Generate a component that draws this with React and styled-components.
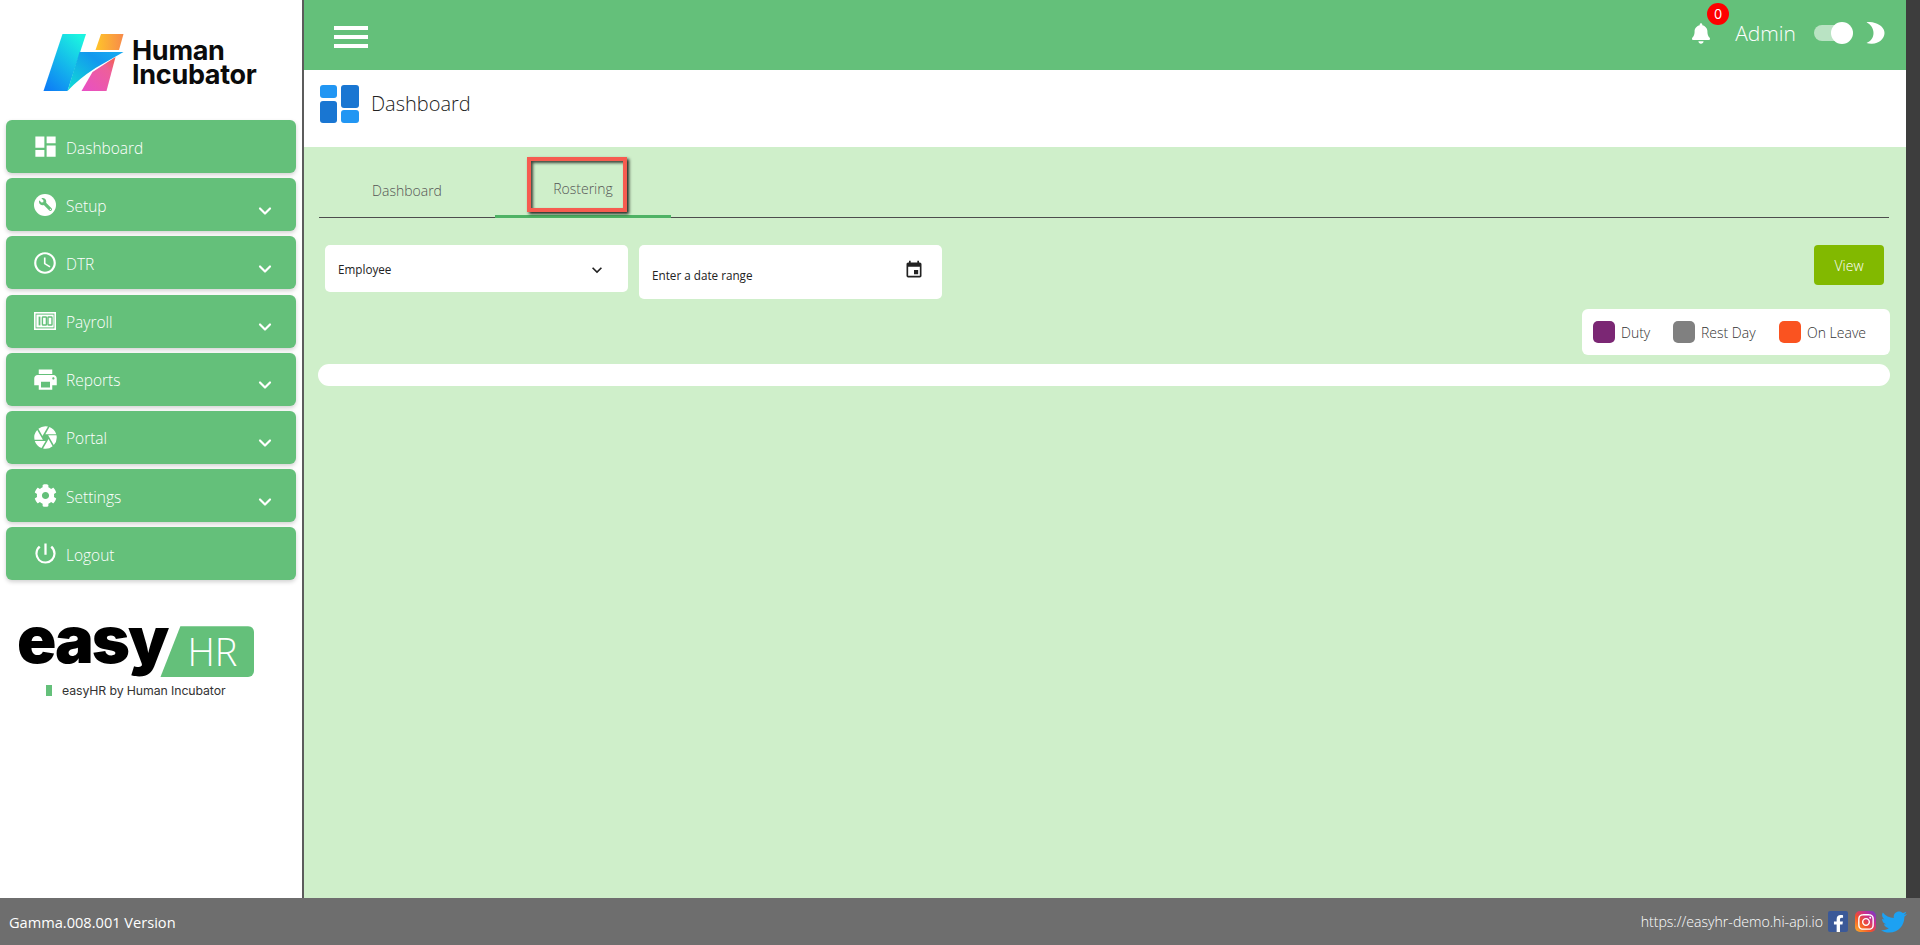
import React from "react";
import styled, { createGlobalStyle } from "styled-components";
import { MdDashboard, MdEvent, MdPowerSettingsNew, MdOutlineAccessTime, MdKeyboardArrowDown, MdPrint, MdCamera } from "react-icons/md";
import { FaCog, FaBell, FaWrench, FaFacebookF, FaInstagram, FaTwitter } from "react-icons/fa";
import { FiChevronDown } from "react-icons/fi";

const Global = createGlobalStyle`
  html, body { margin: 0; padding: 0; background: #fff; }
  * { box-sizing: border-box; }
  body { font-family: "Open Sans", "Liberation Sans", sans-serif; }
`;

const Shell = styled.div`
  width: 1920px;
  height: 945px;
  display: flex;
  flex-direction: column;
  overflow: hidden;
`;
const Upper = styled.div`
  flex: 1;
  display: flex;
  min-height: 0;
`;
const Sidebar = styled.aside`
  width: 304px;
  flex: none;
  background: #fff;
  border-right: 2px solid #5c5c5c;
  padding: 0 6px;
`;
const LogoRow = styled.div`
  height: 120px;
  display: flex;
  align-items: flex-start;
  padding: 34px 0 0 37px;
  gap: 7px;
`;
const LogoWords = styled.div`
  font-family: "Inter", sans-serif;
  font-weight: 700;
  font-size: 27px;
  line-height: 23.5px;
  letter-spacing: -0.3px;
  color: #0b0b0b;
  padding-top: 5px;
`;
const Menu = styled.nav`
  display: flex;
  flex-direction: column;
  gap: 5.2px;
  width: 290px;
`;
const MenuItem = styled.div`
  height: 53px;
  background: #64c07a;
  border-radius: 6px;
  box-shadow: 0 2px 4px rgba(0, 0, 0, 0.18);
  display: flex;
  align-items: center;
  padding: 0 21px 0 28px;
  color: #fff;
  font-size: 15.5px;
  font-weight: 300;
`;
const MenuIcon = styled.span`
  width: 22px;
  height: 22px;
  margin-right: 10px;
  display: flex;
  align-items: center;
  justify-content: center;
  color: #fff;
  svg { flex: none; }
`;
const Label = styled.span`
  padding-top: 2px;
`;
const Chevron = styled(FiChevronDown)`
  margin-left: auto;
  margin-top: 12px;
  font-size: 20px;
  stroke-width: 2.6;
`;
const WrenchDisc = styled.span`
  width: 22px;
  height: 22px;
  border-radius: 50%;
  background: #fff;
  color: #64c07a;
  display: flex;
  align-items: center;
  justify-content: center;
  font-size: 13px;
  svg { transform: scaleX(-1); }
`;
const EasyBlock = styled.div`
  margin: 39px 0 0 11px;
`;
const EasyRow = styled.div`
  display: flex;
  align-items: flex-start;
  height: 62px;
`;
const EasyWord = styled.div`
  font-family: "Inter", sans-serif;
  font-weight: 900;
  font-size: 65px;
  line-height: 58px;
  letter-spacing: -2px;
  color: #000;
  margin-top: -8px;
`;
const HrBadge = styled.div`
  width: 94px;
  height: 51px;
  margin: 7px 0 0 -7px;
  background: #64c07a;
  border-radius: 0 6px 6px 0;
  clip-path: polygon(20px 0, 100% 0, 100% 100%, 0 100%);
  color: #fff;
  font-weight: 300;
  font-size: 38px;
  line-height: 51px;
  text-align: right;
  padding-right: 17px;
`;
const Tagline = styled.div`
  display: flex;
  align-items: center;
  gap: 10px;
  margin: 2px 0 0 29px;
  font-size: 12.3px;
  color: #333;
  font-family: "Inter", sans-serif;
  font-weight: 400;
  letter-spacing: -0.1px;
`;
const TagMark = styled.span`
  width: 6px;
  height: 11px;
  background: #64c07a;
`;
const Main = styled.main`
  flex: 1;
  min-width: 0;
  display: flex;
  flex-direction: column;
  background: #cfefca;
`;
const Strip = styled.div`
  width: 14px;
  flex: none;
  background: #3d3d3d;
`;
const Topbar = styled.header`
  height: 70px;
  flex: none;
  background: #64c07a;
  display: flex;
  align-items: center;
  padding: 0 21px 0 30px;
  color: #fff;
`;
const Burger = styled.div`
  width: 34px;
  height: 22px;
  display: flex;
  flex-direction: column;
  justify-content: space-between;
  margin-top: 4px;
  span { display: block; height: 4px; background: #fff; }
`;
const TopRight = styled.div`
  margin-left: auto;
  display: flex;
  align-items: center;
  margin-top: -4px;
`;
const BellWrap = styled.div`
  position: relative;
  width: 18px;
  height: 22px;
  font-size: 21px;
  display: flex;
  align-items: center;
  justify-content: center;
  margin-right: 25px;
`;
const Badge = styled.span`
  position: absolute;
  top: -19px;
  left: 15px;
  width: 22px;
  height: 22px;
  border-radius: 50%;
  background: #f00;
  color: #fff;
  font-size: 13px;
  font-weight: 400;
  line-height: 22px;
  text-align: center;
  font-family: "Inter", sans-serif;
`;
const AdminName = styled.span`
  font-size: 21px;
  font-weight: 300;
  margin-right: 18px;
`;
const Toggle = styled.div`
  position: relative;
  width: 38px;
  height: 16px;
  border-radius: 8px;
  background: rgba(255, 255, 255, 0.55);
  margin-right: 14px;
`;
const Knob = styled.span`
  position: absolute;
  top: -3px;
  right: -1px;
  width: 22px;
  height: 22px;
  border-radius: 50%;
  background: #fff;
`;
const TitleBar = styled.div`
  height: 77px;
  flex: none;
  background: #fff;
  display: flex;
  align-items: center;
  padding: 0 0 9px 16px;
  gap: 12px;
`;
const Title = styled.h1`
  margin: 0 0 2px;
  font-size: 20px;
  font-weight: 300;
  color: #222;
`;
const Tabs = styled.div`
  display: flex;
  margin: 23px 17px 0 15px;
  height: 48px;
  border-bottom: 1px solid #4d4d4d;
`;
const Tab = styled.div`
  position: relative;
  width: 176px;
  height: 48px;
  display: flex;
  align-items: center;
  justify-content: center;
  padding-bottom: 8px;
  font-size: 14px;
  font-weight: 300;
  color: #555;
  border-bottom: ${(p) => (p.$active ? "3px solid #4fb365" : "none")};
`;
const Callout = styled.span`
  position: absolute;
  left: 32px;
  top: -13px;
  width: 100px;
  height: 55px;
  border: 4px solid #f65c50;
  box-shadow: 2px 2px 3px rgba(0, 0, 0, 0.85), inset 2px 2px 3px rgba(0, 0, 0, 0.7);
`;
const Filters = styled.div`
  display: flex;
  align-items: flex-start;
  gap: 11px;
  padding: 27px 22px 0 21px;
`;
const Field = styled.div`
  width: 303px;
  flex: none;
  height: ${(p) => p.$h}px;
  background: #fff;
  border-radius: 5px;
  display: flex;
  align-items: flex-start;
  justify-content: space-between;
  color: #222;
  font-size: 11.7px;
`;
const FieldText = styled.span`
  padding: ${(p) => p.$top}px 0 0 ${(p) => p.$left}px;
`;
const FieldIcon = styled.span`
  display: flex;
  font-size: 20px;
  color: #222;
  padding: 15px ${(p) => p.$right}px 0 0;
`;
const ViewButton = styled.button`
  margin-left: auto;
  width: 70px;
  height: 40px;
  border: 0;
  border-radius: 4px;
  background: #82b900;
  color: #fff;
  font-family: inherit;
  font-size: 14px;
  font-weight: 300;
`;
const LegendRow = styled.div`
  display: flex;
  justify-content: flex-end;
  padding: 10px 16px 0 0;
`;
const Legend = styled.div`
  width: 308px;
  height: 46px;
  background: #fff;
  border-radius: 6px;
  display: flex;
  align-items: center;
  padding-left: 11px;
`;
const LegendItem = styled.div`
  display: flex;
  align-items: center;
  gap: 6px;
  width: ${(p) => p.$w}px;
  font-size: 14px;
  font-weight: 300;
  color: #333;
`;
const Swatch = styled.span`
  width: 22px;
  height: 22px;
  border-radius: 5px;
  background: ${(p) => p.$c};
`;
const EmptyBar = styled.div`
  margin: 9px 16px 0 14px;
  height: 22px;
  background: #fff;
  border-radius: 11px;
`;
const Footer = styled.footer`
  height: 47px;
  flex: none;
  background: #6e6e6e;
  display: flex;
  align-items: center;
  padding: 0 13px 0 9px;
  color: #fff;
`;
const Version = styled.span`
  font-size: 14.6px;
  font-weight: 400;
  padding-top: 1px;
`;
const FooterRight = styled.div`
  margin-left: auto;
  display: flex;
  align-items: center;
  gap: 5px;
  font-size: 14.1px;
  font-weight: 300;
`;
const Fb = styled.span`
  width: 20px;
  height: 21px;
  background: #3b5998;
  border-radius: 2px;
  display: flex;
  align-items: flex-end;
  justify-content: center;
  font-size: 17px;
  color: #fff;
`;
const Ig = styled.span`
  width: 21px;
  height: 21px;
  border-radius: 5px;
  margin-left: 2px;
  background: linear-gradient(45deg, #fdb32b 0%, #f2502b 40%, #c62f94 70%, #6a3bd0 100%);
  display: flex;
  align-items: center;
  justify-content: center;
  font-size: 18px;
  color: #fff;
`;
const Tw = styled(FaTwitter)`
  font-size: 26px;
  color: #1da1f2;
`;

const HumanLogo = () => (
  <svg width="82" height="58" viewBox="43 34 81 58" style={{ flex: "none" }}>
    <defs>
      <linearGradient id="hiA" x1="0.1" y1="1" x2="0.8" y2="0">
        <stop offset="0" stopColor="#0d7cf6" />
        <stop offset="1" stopColor="#1cf4e0" />
      </linearGradient>
      <linearGradient id="hiB" x1="0" y1="1" x2="1" y2="0.2">
        <stop offset="0" stopColor="#11e0d4" />
        <stop offset="0.7" stopColor="#1398ee" />
        <stop offset="1" stopColor="#16a8f0" />
      </linearGradient>
      <linearGradient id="hiC" x1="0" y1="0" x2="1" y2="0">
        <stop offset="0" stopColor="#ffc52a" />
        <stop offset="1" stopColor="#f78a4a" />
      </linearGradient>
      <linearGradient id="hiD" x1="0" y1="1" x2="1" y2="0">
        <stop offset="0" stopColor="#e84fc6" />
        <stop offset="0.7" stopColor="#ee5f9a" />
        <stop offset="1" stopColor="#f2604a" />
      </linearGradient>
    </defs>
    <path d="M43 91 L62 34 L85.5 34 L67 91 Z" fill="url(#hiA)" />
    <path d="M95 50 L100.5 34 L123 34 L118.5 50 Z" fill="url(#hiC)" />
    <path d="M81 91 L92 72 L115 57 L106 91 Z" fill="url(#hiD)" />
    <path d="M67 91 L79 52 L123 52 L95 68 Q78 79 67 91 Z" fill="url(#hiB)" />
  </svg>
);

const PayrollIcon = () => (
  <svg width="22" height="18" viewBox="0 0 22 18">
    <rect x="0.8" y="0.8" width="20.4" height="16.4" fill="none" stroke="#fff" strokeWidth="1.6" />
    <rect x="2.4" y="2.6" width="17.2" height="12.8" fill="#fff" />
    <rect x="4.6" y="4.6" width="1.8" height="8.8" fill="#64c07a" />
    <rect x="8.4" y="5" width="4" height="8" rx="0.6" fill="none" stroke="#64c07a" strokeWidth="1.4" />
    <rect x="14" y="5" width="4" height="8" rx="0.6" fill="none" stroke="#64c07a" strokeWidth="1.4" />
  </svg>
);

const TitleIcon = () => (
  <svg width="39" height="38" viewBox="0 0 39 38">
    <rect x="0" y="0" width="17" height="13" rx="3" fill="#2196f3" />
    <rect x="0" y="16" width="17" height="22" rx="3" fill="#1976d2" />
    <rect x="21" y="0" width="18" height="23" rx="3" fill="#1976d2" />
    <rect x="21" y="25" width="18" height="13" rx="3" fill="#2196f3" />
  </svg>
);

const Moon = () => (
  <svg width="19" height="22" viewBox="0 0 19 22">
    <path d="M0.5 0.3 C3 -0.3 6 0 9 1 C15 3 18.5 6.5 18.5 11 C18.5 16.5 13 21.6 6 21.8 C4 21.9 2 21.6 0.5 21 C4.5 19.5 7.5 16 7.5 11 C7.5 6.5 5 2.5 0.5 0.3 Z" fill="#fff" />
  </svg>
);

const items = [
  { label: "Dashboard", icon: <MdDashboard size={27} /> },
  { label: "Setup", icon: <WrenchDisc><FaWrench /></WrenchDisc>, more: true },
  { label: "DTR", icon: <MdOutlineAccessTime size={26} />, more: true },
  { label: "Payroll", icon: <PayrollIcon />, more: true },
  { label: "Reports", icon: <MdPrint size={27} />, more: true },
  { label: "Portal", icon: <MdCamera size={27} />, more: true },
  { label: "Settings", icon: <FaCog size={23} />, more: true },
  { label: "Logout", icon: <MdPowerSettingsNew size={27} /> },
];

export default function App() {
  return (
    <Shell>
      <Global />
      <Upper>
        <Sidebar>
          <LogoRow>
            <HumanLogo />
            <LogoWords>Human<br />Incubator</LogoWords>
          </LogoRow>
          <Menu>
            {items.map((it) => (
              <MenuItem key={it.label}>
                <MenuIcon>{it.icon}</MenuIcon>
                <Label>{it.label}</Label>
                {it.more && <Chevron />}
              </MenuItem>
            ))}
          </Menu>
          <EasyBlock>
            <EasyRow>
              <EasyWord>easy</EasyWord>
              <HrBadge>HR</HrBadge>
            </EasyRow>
            <Tagline><TagMark />easyHR by Human Incubator</Tagline>
          </EasyBlock>
        </Sidebar>
        <Main>
          <Topbar>
            <Burger><span /><span /><span /></Burger>
            <TopRight>
              <BellWrap><FaBell /><Badge>0</Badge></BellWrap>
              <AdminName>Admin</AdminName>
              <Toggle><Knob /></Toggle>
              <Moon />
            </TopRight>
          </Topbar>
          <TitleBar>
            <TitleIcon />
            <Title>Dashboard</Title>
          </TitleBar>
          <Tabs>
            <Tab>Dashboard</Tab>
            <Tab $active>Rostering<Callout /></Tab>
          </Tabs>
          <Filters>
            <Field $h={47}>
              <FieldText $top={16} $left={13}>Employee</FieldText>
              <FieldIcon $right={21}><MdKeyboardArrowDown /></FieldIcon>
            </Field>
            <Field $h={54}>
              <FieldText $top={22} $left={13}>Enter a date range</FieldText>
              <FieldIcon $right={18}><MdEvent /></FieldIcon>
            </Field>
            <ViewButton>View</ViewButton>
          </Filters>
          <LegendRow>
            <Legend>
              <LegendItem $w={80}><Swatch $c="#7b2774" />Duty</LegendItem>
              <LegendItem $w={106}><Swatch $c="#808080" />Rest Day</LegendItem>
              <LegendItem $w={100}><Swatch $c="#fa5320" />On Leave</LegendItem>
            </Legend>
          </LegendRow>
          <EmptyBar />
        </Main>
        <Strip />
      </Upper>
      <Footer>
        <Version>Gamma.008.001 Version</Version>
        <FooterRight>
          https://easyhr-demo.hi-api.io
          <Fb><FaFacebookF /></Fb>
          <Ig><FaInstagram /></Ig>
          <Tw />
        </FooterRight>
      </Footer>
    </Shell>
  );
}
